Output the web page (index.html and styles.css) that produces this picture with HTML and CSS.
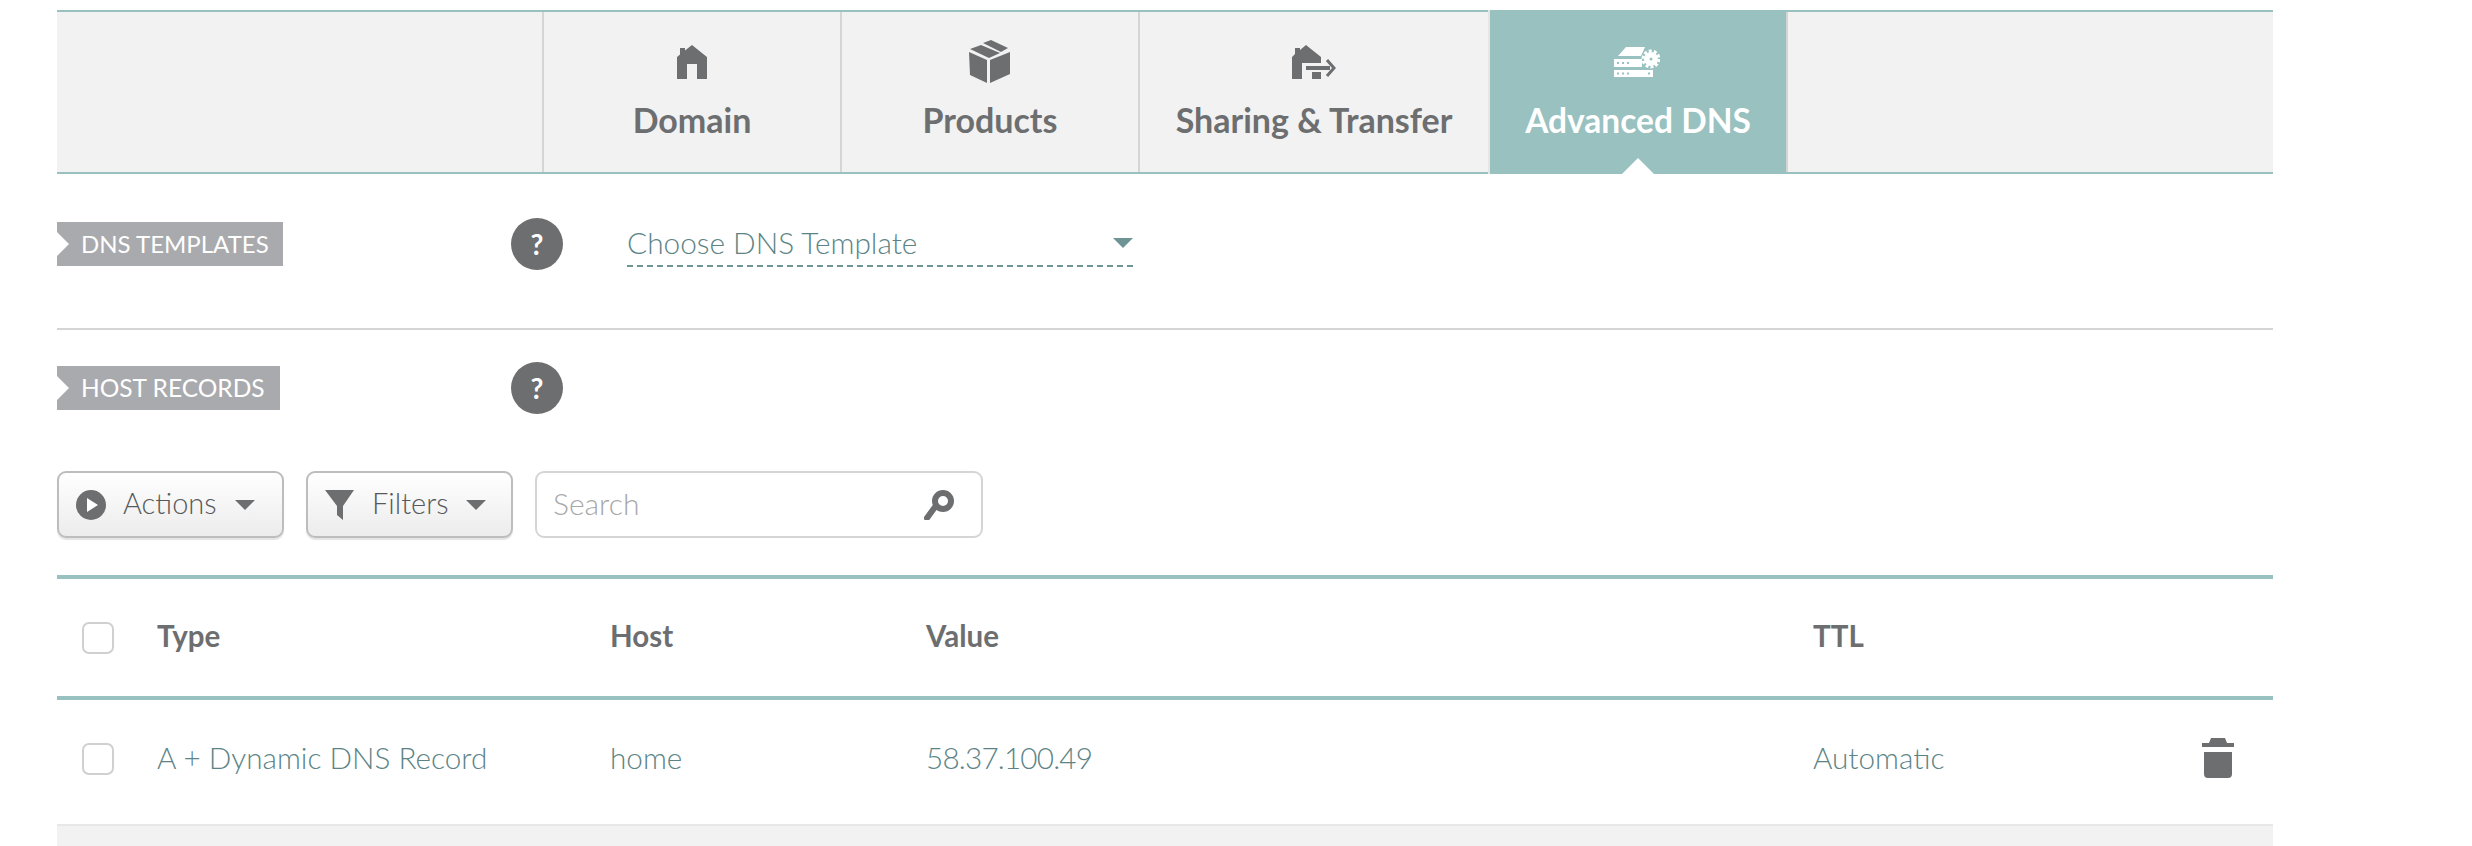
FILE: index.html
```html
<!DOCTYPE html>
<html lang="en">
<head>
    <meta charset="UTF-8">
    <title>Advanced DNS</title>
    <link rel="stylesheet" href="styles.css">
</head>
<body>
    <div class="container">
        <div class="tabs">
            <div class="tab-spacer"></div>
            <div class="tab">
                <svg class="tab-icon" width="30" height="34" viewBox="0 0 30 34"><path d="M0 12L3 9.5V3H8V5.5L15 0L30 12V34H20V19H10V34H0Z"/></svg>
                <span>Domain</span>
            </div>
            <div class="tab">
                <svg class="tab-icon" width="42" height="43" viewBox="0 0 42 43"><path d="M0 12L18 20V43L1 35ZM21 20L41 12V34L21 43ZM1 9L12 5L31 13L20 18ZM14 3L22 0L39 8L32 12Z"/></svg>
                <span>Products</span>
            </div>
            <div class="tab tab-wide">
                <svg class="tab-icon" width="44" height="34" viewBox="0 0 44 34"><path d="M0 12L3 9V3H8V5L14 0L29 12V18H10V34H0ZM20 27H29V34H20ZM14 21H38V25H14Z"/><path class="icon-stroke" d="M35 15L42 23L35 31"/></svg>
                <span>Sharing &amp; Transfer</span>
            </div>
            <div class="tab active">
                <svg class="tab-icon" width="46" height="30" viewBox="0 0 46 30"><path d="M4 9L12 0H31L27 9ZM0 12H28V20H0ZM0 23H39V30H0Z"/><circle cx="37" cy="12" r="7"/><circle class="gear-teeth" cx="37" cy="12" r="8"/><circle class="icon-dot" cx="37" cy="12" r="1.5"/><path class="icon-dot" d="M3 15h2v2H3zM8 15h2v2H8zM13 15h2v2h-2zM3 25.5h2v2H3zM8 25.5h2v2H8zM13 25.5h2v2h-2zM34 25.5h2v2h-2z"/></svg>
                <span>Advanced DNS</span>
            </div>
            <div class="tab tab-end"></div>
        </div>

        <div class="section section-templates">
            <div class="ribbon ribbon-templates">DNS TEMPLATES</div>
            <div class="help">?</div>
            <div class="template-select">
                <span>Choose DNS Template</span>
                <i class="caret caret-teal"></i>
            </div>
        </div>

        <div class="section section-hosts">
            <div class="ribbon ribbon-hosts">HOST RECORDS</div>
            <div class="help">?</div>
        </div>

        <div class="toolbar">
            <button class="button button-actions">
                <svg width="30" height="30" viewBox="0 0 30 30"><circle cx="15" cy="15" r="15" fill="#6d6e70"/><path d="M11 8L22 15L11 22Z" fill="#fff"/></svg>
                <span>Actions</span>
                <i class="caret"></i>
            </button>
            <button class="button button-filters">
                <svg width="30" height="30" viewBox="0 0 30 30"><path d="M0 0H29L18 16V30L12 25V16Z" fill="#6d6e70"/></svg>
                <span>Filters</span>
                <i class="caret"></i>
            </button>
            <div class="search">
                <input type="text" placeholder="Search">
                <svg width="32" height="30" viewBox="0 0 32 30"><circle cx="19" cy="11" r="8" fill="none" stroke="#6d6e70" stroke-width="6"/><path d="M11 17L3 28" stroke="#6d6e70" stroke-width="6" stroke-linecap="round"/></svg>
            </div>
        </div>

        <div class="table">
            <div class="row row-head">
                <div><i class="checkbox"></i></div>
                <div class="cell">Type</div>
                <div class="cell">Host</div>
                <div class="cell">Value</div>
                <div class="cell">TTL</div>
                <div></div>
            </div>
            <div class="row row-body">
                <div><i class="checkbox"></i></div>
                <div class="cell">A + Dynamic DNS Record</div>
                <div class="cell">home</div>
                <div class="cell cell-ip">58.37.100.49</div>
                <div class="cell">Automatic</div>
                <div>
                    <svg class="trash" width="32" height="40" viewBox="0 0 32 40"><path d="M0 5H7L9 0H23L25 5H32V9H0ZM2 14H30V36Q30 40 26 40H6Q2 40 2 36Z" fill="#6d6e70"/></svg>
                </div>
            </div>
            <div class="table-foot"></div>
        </div>
    </div>
</body>
</html>
```

FILE: styles.css
```css
html, body {
    margin: 0;
    height: 846px;
    overflow: hidden;
}
body {
    font-family: 'Lato', 'Open Sans', sans-serif;
    background-color: #fff;
    color: #6d6e70;
}
.container {
    width: 2216px;
    margin-left: 57px;
    padding-top: 10px;
}

/* tabs */
.tabs {
    display: flex;
    height: 160px;
    background-color: #f2f2f2;
    border-top: 2px solid #98c1c0;
    border-bottom: 2px solid #98c1c0;
}
.tab-spacer {
    width: 485px;
}
.tab {
    position: relative;
    box-sizing: border-box;
    width: 298px;
    display: flex;
    flex-direction: column;
    align-items: center;
    border-left: 2px solid #d5d5d5;
    font-size: 34px;
    font-weight: 700;
}
.tab-wide {
    width: 350px;
}
.tab-end {
    flex: 1;
}
.tab span {
    position: absolute;
    top: 88px;
    left: 0;
    right: 0;
    text-align: center;
    line-height: 40px;
    white-space: nowrap;
}
.tab-icon {
    position: absolute;
    top: 33px;
    fill: #6d6e70;
}
.tab:nth-child(3) .tab-icon {
    top: 28px;
}
.tab.active {
    background-color: #98c1c0;
    color: #fff;
    margin-top: -2px;
    margin-bottom: -2px;
    border-left-color: #e6e6e6;
    font-size: 33.5px;
}
.tab.active .tab-icon {
    top: 37px;
    margin-left: -2px;
    fill: #fff;
}
.tab.active span {
    top: 90px;
}
.tab.active::after {
    content: "";
    position: absolute;
    left: 50%;
    bottom: 0;
    margin-left: -16px;
    border-left: 16px solid transparent;
    border-right: 16px solid transparent;
    border-bottom: 16px solid #fff;
}
.icon-stroke {
    fill: none;
    stroke: #6d6e70;
    stroke-width: 3;
}
.icon-dot {
    fill: #98c1c0;
}
.gear-teeth {
    fill: none;
    stroke: #fff;
    stroke-width: 3;
    stroke-dasharray: 3 2.03;
}

/* sections */
.section {
    display: grid;
    grid-template-columns: 454px 116px 506px;
    align-items: center;
}
.section-templates {
    padding: 44px 0 58px;
    border-bottom: 2px solid #d5d5d5;
}
.section-hosts {
    padding-top: 32px;
}
.ribbon {
    box-sizing: border-box;
    justify-self: start;
    height: 44px;
    padding-left: 24px;
    background-color: #a9aaad;
    color: #fff;
    font-size: 24px;
    line-height: 44px;
    white-space: nowrap;
    clip-path: polygon(0 0, 100% 0, 100% 100%, 0 100%, 0 34px, 12px 22px, 0 10px);
}
.ribbon-templates {
    width: 226px;
}
.ribbon-hosts {
    width: 223px;
    font-size: 24.5px;
}
.help {
    width: 52px;
    height: 52px;
    border-radius: 50%;
    background-color: #6d6e70;
    color: #fff;
    font-size: 28px;
    font-weight: 700;
    line-height: 52px;
    text-align: center;
}
.template-select {
    display: flex;
    align-items: center;
    justify-content: space-between;
    height: 46px;
    border-bottom: 2px dashed #6f9496;
    box-sizing: border-box;
    color: #5c8486;
    font-size: 29.8px;
    font-weight: 300;
}
.template-select span {
    position: relative;
    top: -1px;
}
.caret {
    display: block;
    border-left: 10px solid transparent;
    border-right: 10px solid transparent;
    border-top: 10px solid #6d6e70;
}
.caret-teal {
    border-top-color: #6f9496;
}

/* toolbar */
.toolbar {
    display: flex;
    gap: 22px;
    margin-top: 57px;
}
.button {
    box-sizing: border-box;
    display: flex;
    align-items: center;
    height: 67px;
    padding: 0 0 0 17px;
    border: 2px solid #bdbdbd;
    border-radius: 9px;
    background: linear-gradient(#ffffff, #ececec);
    box-shadow: 0 2px 1px #e4e4e4;
    color: #58595b;
    font-family: inherit;
    font-size: 29px;
    font-weight: 300;
}
.button-actions {
    width: 227px;
}
.button-filters {
    width: 207px;
}
.button span {
    position: relative;
    top: -2px;
    margin: 0 17px 0 17px;
}
.button-actions span {
    margin-right: 18px;
}
.search {
    box-sizing: border-box;
    display: flex;
    align-items: center;
    width: 448px;
    height: 67px;
    padding: 0 25px 0 16px;
    border: 2px solid #d5d5d5;
    border-radius: 9px;
}
.search input {
    flex: 1;
    min-width: 0;
    border: none;
    outline: none;
    padding: 0 0 3px;
    font-family: inherit;
    font-size: 30px;
    font-weight: 300;
}
.search input::placeholder {
    color: #a8a8a8;
    opacity: 1;
}

/* table */
.table {
    margin-top: 37px;
}
.row {
    display: grid;
    grid-template-columns: 100px 453px 316px 887px 389px 1fr;
    align-items: center;
}
.row-head {
    height: 117px;
    border-top: 4px solid #98c1c0;
    border-bottom: 4px solid #98c1c0;
    font-size: 29.5px;
    font-weight: 700;
}
.row-body {
    box-sizing: border-box;
    height: 124px;
    padding-bottom: 6px;
    color: #5c8486;
    font-size: 29.7px;
    font-weight: 300;
}
.cell {
    position: relative;
    top: -2px;
}
.cell-ip {
    letter-spacing: -0.8px;
}
.checkbox {
    display: block;
    box-sizing: border-box;
    width: 32px;
    height: 32px;
    margin-left: 25px;
    border: 2px solid #d0d0d0;
    border-radius: 7px;
}
.trash {
    display: block;
    margin-top: -2px;
}
.table-foot {
    box-sizing: border-box;
    height: 22px;
    background-color: #f2f2f2;
    border-top: 2px solid #e8e8e8;
}
```
